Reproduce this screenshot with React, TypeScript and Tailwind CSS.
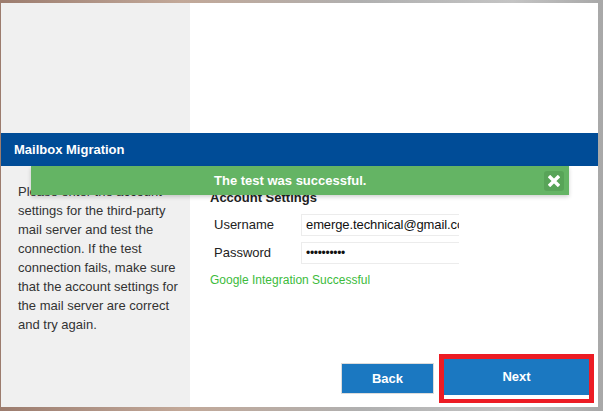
import React from "react";

const lines = [
  "Please enter the account",
  "settings for the third-party",
  "mail server and test the",
  "connection. If the test",
  "connection fails, make sure",
  "that the account settings for",
  "the mail server are correct",
  "and try again.",
];

export default function App() {
  return (
    <div
      className="w-[603px] h-[411px] pl-[1px] pt-[3px] bg-[linear-gradient(to_right,#9c7c6e,#b59a8c_20%,#c2a898_30%,#b0b0b0_60%,#c4c4c4_85%,#a8a8a8)] overflow-hidden"
      style={{ fontFamily: '"Liberation Sans", Arial, sans-serif' }}
    >
      <div className="relative w-[597px] h-[404px] bg-white flex flex-col">
        {/* top area */}
        <div className="flex h-[130px]">
          <div className="w-[189px] bg-[#f0f0f0]" />
          <div className="flex-1 bg-white" />
        </div>
        {/* header band */}
        <div className="h-[33px] bg-[#004c97] flex items-center pl-[13px]">
          <span className="text-white font-bold text-[13px]">Mailbox Migration</span>
        </div>
        {/* body */}
        <div className="flex flex-1">
          <div className="w-[189px] bg-[#f0f0f0] pl-[17px] pt-[16px] text-[13px] leading-[19px] text-[#333]">
            {lines.map((l) => (
              <div key={l} className="whitespace-nowrap">
                {l}
              </div>
            ))}
          </div>
          <div className="flex-1 flex flex-col pl-[20px] pt-[24px] pb-[4px] pr-[4px]">
            <div className="text-[13px] font-bold text-[#222] leading-[15px]">Account Settings</div>
            <div className="flex items-center mt-[9px] h-[22px]">
              <span className="w-[91px] pl-[4px] text-[13px] text-[#222]">Username</span>
              <div className="w-[158px] h-[22px] border border-[#ececec] border-r-0 pl-[4px] flex items-center overflow-hidden text-[13px] text-[#111] whitespace-nowrap tracking-[-0.1px]">
                emerge.technical@gmail.com
              </div>
            </div>
            <div className="flex items-center mt-[6px] h-[22px]">
              <span className="w-[91px] pl-[4px] text-[13px] text-[#222]">Password</span>
              <div className="w-[158px] h-[22px] border border-[#ececec] border-r-0 pl-[4px] flex items-center overflow-hidden text-[12px] text-[#111] whitespace-nowrap tracking-[-0.3px]">
                ••••••••••
              </div>
            </div>
            <div className="mt-[7px] text-[12px] text-[#3cbb3c]">Google Integration Successful</div>
            <div className="mt-auto flex items-center justify-end gap-[5px]">
              <button className="w-[93px] h-[31px] bg-[#1b78c1] border border-[#dcdcdc] text-white font-bold text-[13px]">
                Back
              </button>
              <div className="w-[155px] h-[49px] border-[5px] border-b-[4px] border-[#ec1c24] bg-white pb-[4px]">
                <button className="w-full h-full bg-[#1b78c1] text-white font-bold text-[13px]">Next</button>
              </div>
            </div>
          </div>
        </div>
        {/* toast */}
        <div className="absolute left-[30px] top-[163px] w-[538px] h-[29px] bg-[#64b464] shadow-[0_2px_4px_rgba(0,0,0,0.18)] flex items-center justify-between pl-[183px] pr-[5px]">
          <span className="text-white font-bold text-[13px]">The test was successful.</span>
          <div className="w-[20px] h-[20px] rounded-[3px] bg-[#58a458] flex items-center justify-center">
            <svg width="12" height="12" viewBox="0 0 12 12">
              <path d="M2.2 2.2 L9.8 9.8 M9.8 2.2 L2.2 9.8" stroke="#fff" strokeWidth="3.4" strokeLinecap="square" />
            </svg>
          </div>
        </div>
      </div>
    </div>
  );
}
